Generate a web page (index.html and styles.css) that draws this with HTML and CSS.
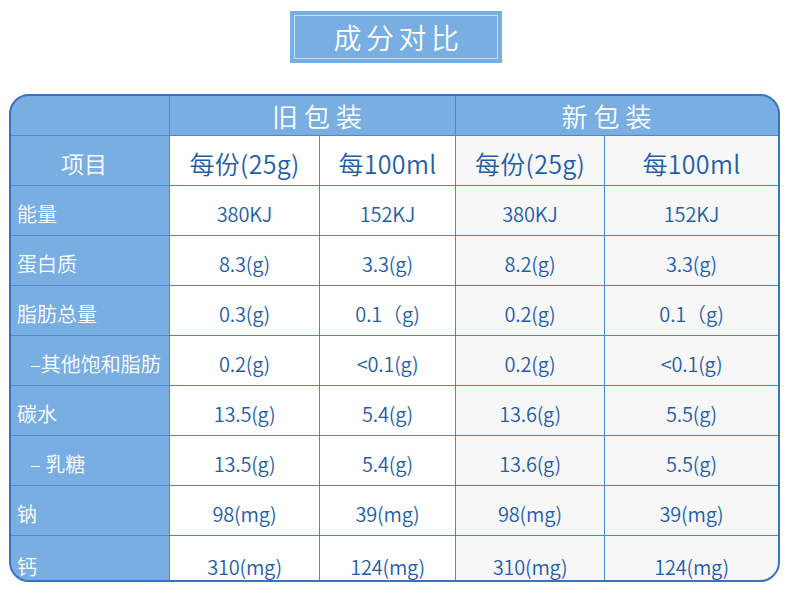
FILE: index.html
```html
<!DOCTYPE html>
<html lang="zh">
<head>
<meta charset="utf-8">
<link rel="stylesheet" href="styles.css">
</head>
<body>
<div class="page">
  <div class="title"><div class="title-inner">成分对比</div></div>
  <div class="table">
    <div class="c lab"></div>
    <div class="c grp old span2">旧包装</div>
    <div class="c grp new span2">新包装</div>

    <div class="c lab head">项目</div>
    <div class="c sub">每份(25g)</div>
    <div class="c sub">每100ml</div>
    <div class="c sub alt">每份(25g)</div>
    <div class="c sub alt">每100ml</div>

    <div class="c lab">能量</div>
    <div class="c v">380KJ</div><div class="c v">152KJ</div><div class="c v alt">380KJ</div><div class="c v alt">152KJ</div>

    <div class="c lab">蛋白质</div>
    <div class="c v">8.3(g)</div><div class="c v">3.3(g)</div><div class="c v alt">8.2(g)</div><div class="c v alt">3.3(g)</div>

    <div class="c lab">脂肪总量</div>
    <div class="c v">0.3(g)</div><div class="c v">0.1（g)</div><div class="c v alt">0.2(g)</div><div class="c v alt">0.1（g)</div>

    <div class="c lab ind">–其他饱和脂肪</div>
    <div class="c v">0.2(g)</div><div class="c v">&lt;0.1(g)</div><div class="c v alt">0.2(g)</div><div class="c v alt">&lt;0.1(g)</div>

    <div class="c lab">碳水</div>
    <div class="c v">13.5(g)</div><div class="c v">5.4(g)</div><div class="c v alt">13.6(g)</div><div class="c v alt">5.5(g)</div>

    <div class="c lab ind">– 乳糖</div>
    <div class="c v">13.5(g)</div><div class="c v">5.4(g)</div><div class="c v alt">13.6(g)</div><div class="c v alt">5.5(g)</div>

    <div class="c lab">钠</div>
    <div class="c v">98(mg)</div><div class="c v">39(mg)</div><div class="c v alt">98(mg)</div><div class="c v alt">39(mg)</div>

    <div class="c lab last">钙</div>
    <div class="c v last">310(mg)</div><div class="c v last">124(mg)</div><div class="c v alt last">310(mg)</div><div class="c v alt last">124(mg)</div>
  </div>
</div>
</body>
</html>
```
FILE: styles.css
```css
html, body {
  margin: 0;
  padding: 0;
  background: #ffffff;
}
body {
  font-family: "Noto Sans CJK SC", "Noto Sans", sans-serif;
  font-weight: 350;
}
.page {
  width: 790px;
  height: 599px;
  padding-top: 11px;
  box-sizing: border-box;
}
.title {
  width: 212px;
  height: 52px;
  margin: 0 auto 0 290px;
  background: #78aee2;
  padding: 4px;
  box-sizing: border-box;
}
.title-inner {
  height: 100%;
  border: 1px solid rgba(255,255,255,0.6);
  box-sizing: border-box;
  color: #ffffff;
  font-size: 28px;
  letter-spacing: 4.5px;
  display: flex;
  align-items: center;
  justify-content: center;
  padding-left: 5px;
}
.table {
  margin: 31px 0 0 9px;
  width: 771px;
  box-sizing: border-box;
  border: 2px solid #3773bf;
  border-radius: 20px;
  overflow: hidden;
  background: #4a89d1;
  display: grid;
  grid-template-columns: 158px 149px 135px 148px 173px;
  grid-template-rows: 39px 49px repeat(7, 49px) 44px;
  column-gap: 1px;
  row-gap: 1px;
}
.c {
  display: flex;
  align-items: center;
  justify-content: center;
  background: #ffffff;
  color: #1f5ea7;
}
.alt {
  background: #f7f7f7;
}
.span2 {
  grid-column: span 2;
}
.lab {
  background: #78aee2;
  color: #ffffff;
  font-size: 20px;
  justify-content: flex-start;
  padding-left: 6px;
  padding-top: 6px;
}
.lab.head {
  justify-content: center;
  padding-left: 0;
  padding-right: 12px;
  padding-top: 4px;
  font-size: 23px;
}
.lab.ind {
  padding-left: 19px;
}
.grp {
  background: #78aee2;
  color: #ffffff;
  font-size: 26px;
  letter-spacing: 6px;
}
.grp.old {
  padding-left: 15px;
}
.grp.new {
  padding-right: 15px;
}
.sub {
  font-size: 25px;
  letter-spacing: 0.3px;
  padding-top: 4px;
}
.v {
  font-size: 20px;
  letter-spacing: -0.2px;
  padding-top: 6px;
}
.c.last {
  padding-top: 16px;
}
```
